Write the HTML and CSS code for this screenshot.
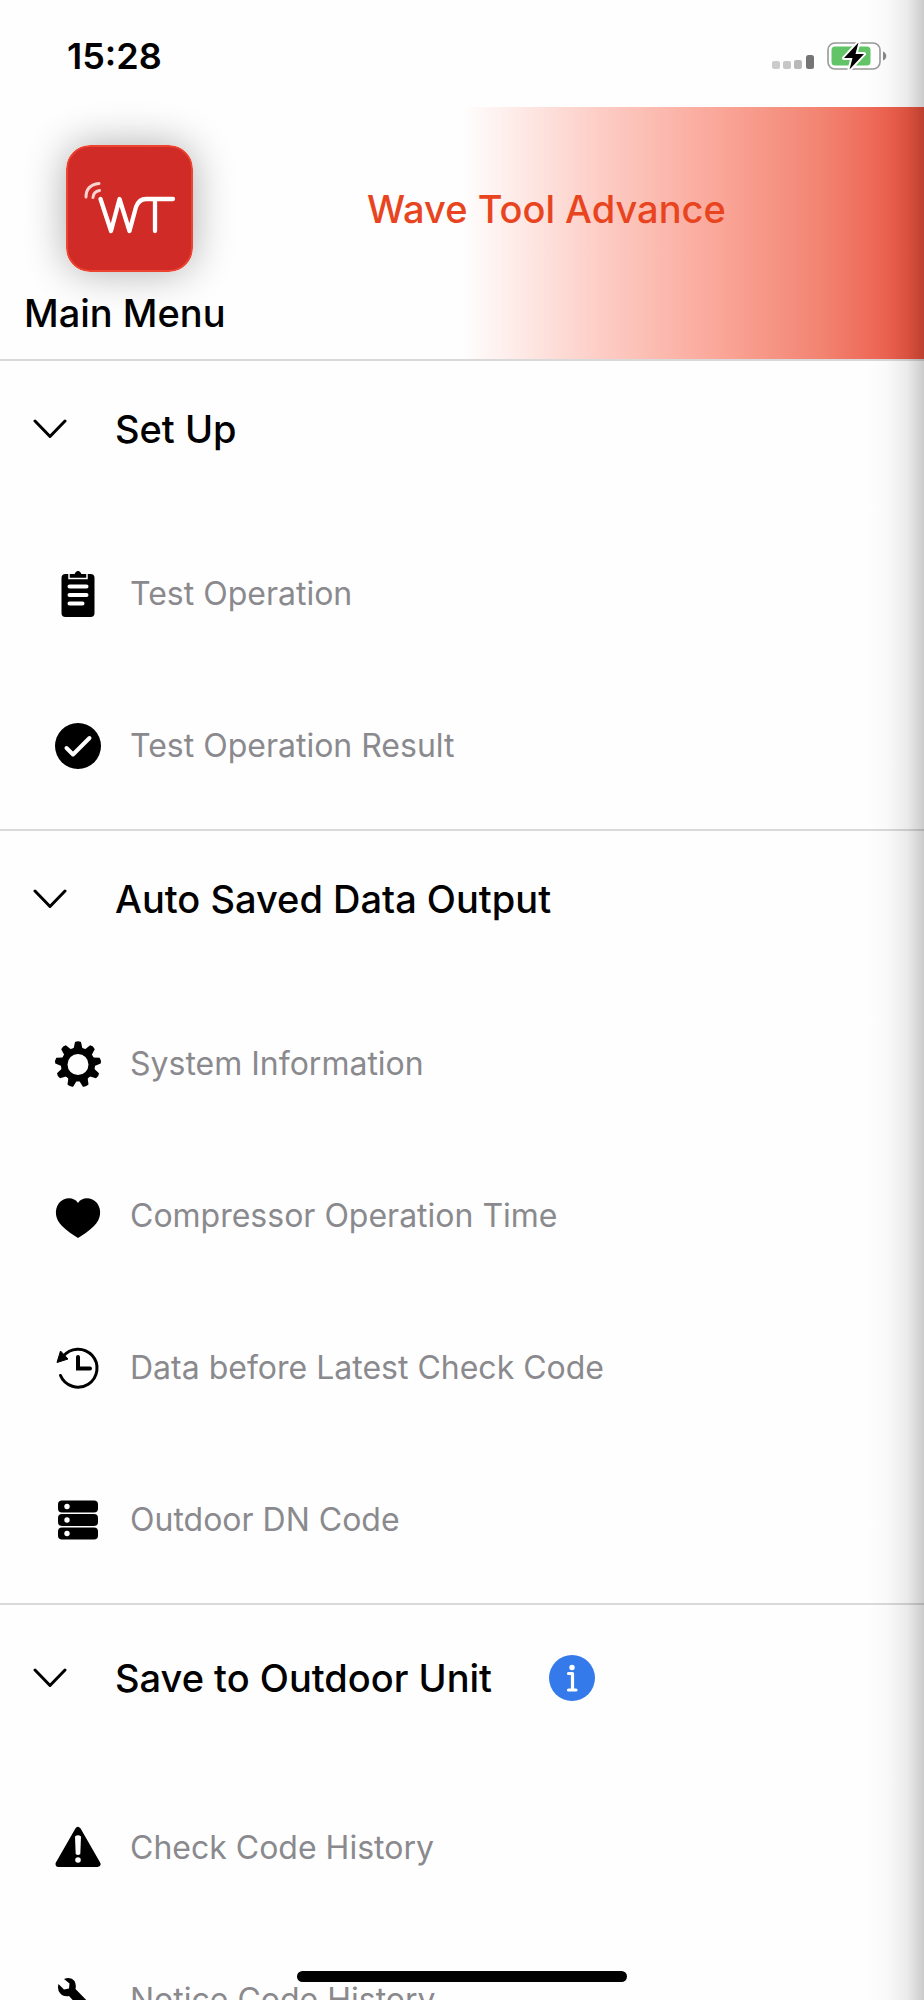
FILE: index.html
```html
<!DOCTYPE html>
<html lang="en">
<head>
<meta charset="utf-8">
<meta name="viewport" content="width=device-width, initial-scale=1">
<title>Wave Tool Advance</title>
<link rel="stylesheet" href="styles.css">
</head>
<body>
<div class="app">
  <div class="status-bar">
    <time class="clock">15:28</time>
    <div class="status-icons">
      <svg class="signal" viewBox="0 0 42 14" aria-label="Signal">
        <rect x="0" y="6" width="8" height="8" rx="2" fill="#cbcbcb"/>
        <rect x="11" y="6" width="8" height="8" rx="2" fill="#c6c6c6"/>
        <rect x="22" y="5" width="8" height="9" rx="2" fill="#b9b9b9"/>
        <rect x="34" y="0" width="8" height="14" rx="2.5" fill="#757575"/>
      </svg>
      <svg class="battery" viewBox="0 0 60 30" aria-label="Battery charging">
        <rect x="1" y="2" width="52" height="26" rx="7" fill="#fff" stroke="#999" stroke-width="1.6"/>
        <path d="M56 10.500q3.300 1.500 3.300 4.500t-3.300 4.500z" fill="#888"/>
        <rect x="4.500" y="5.500" width="39" height="19" rx="3.500" fill="#62c466"/>
        <path d="M31.500 1.500 17 17h8.500L22.500 28.500 37 13h-8.500z" fill="#000" stroke="#fff" stroke-width="4" stroke-linejoin="round" paint-order="stroke"/>
      </svg>
    </div>
  </div>

  <header class="header">
    <svg class="logo" viewBox="0 0 127 127" aria-label="WT logo">
      <rect x="1" y="1" width="125" height="125" rx="23" fill="#d02b26" stroke="#ec4430" stroke-width="2"/>
      <g fill="none" stroke="#fff" stroke-linecap="round" stroke-linejoin="round">
        <path d="M34.500 54 45 86 53.500 54 63.500 86 70 62Q73 54 80 54H107M89 55V86" stroke-width="4.300"/>
        <path d="M20 52Q20 40 33 38.500M27 52.500Q27.500 46.500 33.500 45.500" stroke-width="3" stroke="#f8d3d1"/>
      </g>
    </svg>
    <h1 class="title">Wave Tool Advance</h1>
    <p class="menu-label">Main Menu</p>
  </header>

  <main class="menu">
    <section class="section">
      <div class="section-head">
        <button class="toggle" type="button"><svg class="chevron" viewBox="0 0 34 20"><path d="M2 2 17 17.500 32 2"/></svg>Set Up</button>
      </div>
      <nav>
        <a class="item" href="#"><svg class="icon" viewBox="0 0 48 48">
          <rect x="7.500" y="4" width="33" height="43" rx="4"/>
          <path d="M15 3V8.500H33V3" fill="none" stroke="#fff" stroke-width="1.500"/>
          <path d="M17 7V4.500H20.500Q21.500 1 24 1T27.500 4.500H31V7z"/>
          <path d="M15.500 16.500H32.500M15.500 25H32.500M15.500 33.500H28.500" stroke="#fff" stroke-width="4" stroke-linecap="round"/>
        </svg>Test Operation</a>
        <a class="item" href="#"><svg class="icon" viewBox="0 0 48 48">
          <circle cx="24" cy="24" r="23"/>
          <path d="M12.500 26 19 32.500 35.500 16" fill="none" stroke="#fff" stroke-width="4" stroke-linecap="round" stroke-linejoin="round"/>
        </svg>Test Operation Result</a>
      </nav>
    </section>

    <section class="section">
      <div class="section-head">
        <button class="toggle" type="button"><svg class="chevron" viewBox="0 0 34 20"><path d="M2 2 17 17.500 32 2"/></svg>Auto Saved Data Output</button>
      </div>
      <nav>
        <a class="item" href="#"><svg class="icon" viewBox="0 0 48 48">
          <defs><path id="tooth" d="M19.500 9 21 2Q24 .5 27 2L28.500 9z"/></defs>
          <circle cx="24" cy="24.500" r="13.800" fill="none" stroke="#000" stroke-width="6.600"/>
          <use href="#tooth"/>
          <use href="#tooth" transform="rotate(40 24 24.500)"/>
          <use href="#tooth" transform="rotate(80 24 24.500)"/>
          <use href="#tooth" transform="rotate(120 24 24.500)"/>
          <use href="#tooth" transform="rotate(160 24 24.500)"/>
          <use href="#tooth" transform="rotate(200 24 24.500)"/>
          <use href="#tooth" transform="rotate(240 24 24.500)"/>
          <use href="#tooth" transform="rotate(280 24 24.500)"/>
          <use href="#tooth" transform="rotate(320 24 24.500)"/>
        </svg>System Information</a>
        <a class="item" href="#"><svg class="icon" viewBox="0 0 48 48">
          <path d="M24 11C20 4.500 10 5 5 11 0 18 1 27 8 34 13 39 19 43 24 46 29 43 35 39 40 34 47 27 48 18 43 11 38 5 28 4.500 24 11z"/>
        </svg>Compressor Operation Time</a>
        <a class="item" href="#"><svg class="icon" viewBox="0 0 48 48">
          <path d="M6.500 31.500A19 19 0 1 0 9 12.500" fill="none" stroke="#000" stroke-width="3" stroke-linecap="round"/>
          <path d="M3 18.500 6.500 7 14 15z" stroke="#000" stroke-width="1" stroke-linejoin="round"/>
          <path d="M24 13V24.500H36" fill="none" stroke="#000" stroke-width="4" stroke-linecap="round"/>
        </svg>Data before Latest Check Code</a>
        <a class="item" href="#"><svg class="icon" viewBox="0 0 48 48">
          <rect x="4" y="4.500" width="40" height="12" rx="4"/>
          <rect x="4" y="18" width="40" height="12" rx="4"/>
          <rect x="4" y="31.500" width="40" height="12" rx="4"/>
          <g fill="#fff"><circle cx="13" cy="10.500" r="2.700"/><circle cx="13" cy="24" r="2.700"/><circle cx="13" cy="37.500" r="2.700"/></g>
        </svg>Outdoor DN Code</a>
      </nav>
    </section>

    <section class="section">
      <div class="section-head section-head-info">
        <button class="toggle" type="button"><svg class="chevron" viewBox="0 0 34 20"><path d="M2 2 17 17.500 32 2"/></svg>Save to Outdoor Unit</button>
        <button class="info" type="button" aria-label="Information"><svg class="info-icon" viewBox="0 0 46 46">
          <circle cx="23" cy="23" r="23" fill="#347aeb"/>
          <circle cx="23" cy="12.500" r="2.700" fill="#fff"/>
          <path d="M19.500 18.500H23.500V35M19.500 35H27" fill="none" stroke="#fff" stroke-width="3.200" stroke-linecap="round" stroke-linejoin="round"/>
        </svg></button>
      </div>
      <nav>
        <a class="item" href="#"><svg class="icon" viewBox="0 0 48 48">
          <path d="M24 6 43.500 40H4.500z" stroke="#000" stroke-width="6" stroke-linejoin="round"/>
          <path d="M21 12.500Q24 10 27 12.500L26.300 30Q24 32 21.700 30z" fill="#fff"/>
          <circle cx="24" cy="36" r="2.800" fill="#fff"/>
        </svg>Check Code History</a>
        <a class="item" href="#"><svg class="icon" viewBox="0 0 48 48">
          <path d="M10 3Q17 .5 20.500 5 22.500 8.500 21.500 13L44 36Q47 41 43 44 40 46 36 43L15 20Q9 21 6 17 3 13.500 4.500 8L10 13.500 15 12.500 15.500 7.500z"/>
        </svg>Notice Code History</a>
      </nav>
    </section>
  </main>
  <div class="edge-shadow"></div>
  <div class="home-indicator"></div>
</div>
</body>
</html>
```

FILE: styles.css
```css
* { box-sizing: border-box; }

body {
  margin: 0;
  background: #fefefe;
  color: #000;
  font-family: Inter, "Liberation Sans", sans-serif;
}

button {
  margin: 0;
  padding: 0;
  border: 0;
  background: none;
  color: inherit;
  font: inherit;
}

svg { display: block; flex: none; }

.app {
  position: relative;
  display: flex;
  flex-direction: column;
  height: 100vh;
  overflow: hidden;
}

.status-bar {
  display: flex;
  flex: none;
  align-items: center;
  justify-content: space-between;
  padding: 32px 37px 27px 67px;
}

.clock {
  font-size: 36px;
  font-weight: 600;
  line-height: 48px;
}

.status-icons { display: flex; align-items: center; gap: 13px; }
.signal { width: 42px; height: 14px; margin-top: 12px; }
.battery { width: 60px; height: 30px; }

.header {
  display: grid;
  flex: none;
  grid-template-columns: 343px 1fr;
  row-gap: 17px;
  align-items: center;
  padding: 38px 24px 22px;
  border-bottom: 2px solid #d9d9d9;
  background: linear-gradient(90deg, #fefefe 50%, #fdcdc5 65%, #faa698 78%, #f28371 89%, #ee6755 95%, #ec503b 100%);
}

.logo {
  width: 127px;
  height: 127px;
  margin-left: 42px;
  border-radius: 24px;
  box-shadow: 0 0 42px rgba(0, 0, 0, 0.32);
}

.title,
.menu-label,
.toggle {
  font-size: 38px;
  font-weight: 500;
  line-height: 48px;
}

.title { margin: 0; color: #e94420; }
.menu-label { margin: 0; }

.menu {
  flex: 1;
  min-height: 0;
  overflow-y: auto;
  scrollbar-width: none;
}

.section {
  padding-bottom: 7px;
  border-bottom: 2px solid #d9d9d9;
}

.section-head {
  display: flex;
  align-items: center;
  gap: 57px;
  padding: 44px 33px 65px;
}

.section-head-info { padding: 49px 33px 70px; }

.toggle { display: flex; align-items: center; gap: 48px; }

.chevron {
  width: 34px;
  height: 20px;
  fill: none;
  stroke: #000;
  stroke-width: 3;
  stroke-linecap: round;
  stroke-linejoin: round;
}

.info-icon { width: 46px; height: 46px; }

.item {
  display: flex;
  align-items: center;
  gap: 28px;
  padding: 52px 54px;
  color: #8a8a8e;
  font-size: 32px;
  line-height: 48px;
  text-decoration: none;
}

.icon { width: 48px; height: 48px; fill: #000; }

.edge-shadow {
  position: absolute;
  inset: 0 0 0 auto;
  width: 56px;
  background: linear-gradient(90deg, transparent, rgba(0, 0, 0, 0.02) 35%, rgba(0, 0, 0, 0.08) 70%, rgba(0, 0, 0, 0.2));
  pointer-events: none;
}

.home-indicator {
  position: absolute;
  bottom: 18px;
  left: 50%;
  width: 330px;
  height: 11px;
  border-radius: 6px;
  background: #000;
  transform: translateX(-50%);
}
```
